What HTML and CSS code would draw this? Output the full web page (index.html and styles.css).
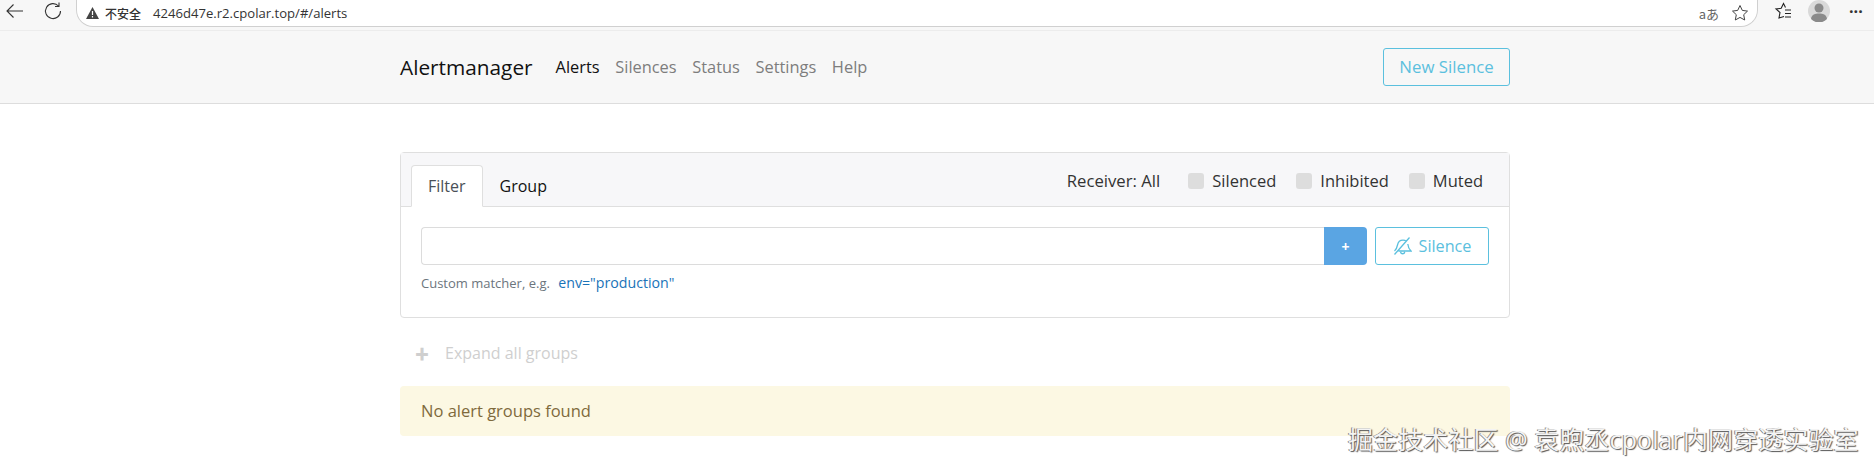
FILE: index.html
```html
<!DOCTYPE html>
<html lang="zh">
<head>
<meta charset="utf-8">
<title>Alertmanager</title>
<link rel="stylesheet" href="styles.css">
</head>
<body>
<div class="chrome">
  <svg class="ico back" width="20" height="20" viewBox="0 0 20 20"><path d="M19 10H3.500M9.500 3.500 3 10l6.500 6.500" fill="none" stroke="#333" stroke-width="1.100"/></svg>
  <svg class="ico reload" width="20" height="20" viewBox="0 0 20 20"><path d="M15.500 5A7.500 7.500 0 1 0 17.500 10M16 1.500V5.500h-4" fill="none" stroke="#333" stroke-width="1.100"/></svg>
  <div class="url">
    <svg width="13" height="12" viewBox="0 0 13 12"><path d="M6.500 0 13 12H0z" fill="#444"/><path d="M6.500 4v4M6.500 9v1.500" stroke="#fff" stroke-width="1.200"/></svg>
    <span class="insecure">不安全</span>
    <span class="addr">4246d47e.r2.cpolar.top/#/alerts</span>
    <span class="url-gap"></span>
    <span class="aa">aあ</span>
    <svg width="18" height="18" viewBox="0 0 18 18"><path d="m9 1.500 2.300 4.900 5.200.7-3.800 3.600 1 5.300L9 13.400l-4.700 2.600 1-5.300L1.500 7.100l5.200-.7z" fill="none" stroke="#444"/></svg>
  </div>
  <svg class="fav" width="18" height="18" viewBox="0 0 18 18"><path d="M10 14.500 5 16l1-5.500L2 7l5.200-.7L9.500 1.500l2 4" fill="none" stroke="#222" stroke-width="1.100"/><path d="M11 8h6M11 11.500h6M11 15h6" stroke="#222"/></svg>
  <svg class="avatar" width="22" height="22" viewBox="0 0 22 22"><circle cx="11" cy="11" r="11" fill="#d9d9d9"/><circle cx="11" cy="8" r="4.500" fill="#8a8a8a"/><path d="M3 19c1-5 4-5.500 8-5.500s7 .5 8 5.500a11 11 0 0 1-16 0z" fill="#8a8a8a"/></svg>
  <span class="more">···</span>
</div>

<nav class="navbar">
  <div class="shell nav-row">
    <a class="brand">Alertmanager</a>
    <a class="nav-link active">Alerts</a>
    <a class="nav-link">Silences</a>
    <a class="nav-link">Status</a>
    <a class="nav-link">Settings</a>
    <a class="nav-link">Help</a>
    <button class="btn new">New Silence</button>
  </div>
</nav>

<main class="shell content">
  <section class="card">
    <header class="card-head">
      <a class="tab on">Filter</a>
      <a class="tab">Group</a>
      <span class="receiver">Receiver: All</span>
      <label class="check"><i></i>Silenced</label>
      <label class="check"><i></i>Inhibited</label>
      <label class="check"><i></i>Muted</label>
    </header>
    <div class="card-body">
      <div class="filter-row">
        <div class="input"></div>
        <button class="plus">+</button>
        <button class="btn silence">
          <svg width="19" height="18" viewBox="0 0 19 18"><path d="M1.500 17.500 16.500.5M1.500 14c2-1.500 2.500-3.500 3-6 .6-3 3-4.800 5.500-4.800 1.300 0 2.500.4 3.400 1.200M14.800 7c.3 3 1.300 5.300 3.200 7H5.500M7.500 15c.6 2.300 3.700 2.300 4.300 0" fill="none" stroke="currentColor" stroke-width="1.300"/></svg>
          Silence
        </button>
      </div>
      <p class="hint">Custom matcher, e.g. <a>env="production"</a></p>
    </div>
  </section>
  <div class="expand"><b>✚</b><span>Expand all groups</span></div>
  <div class="alert">No alert groups found</div>
</main>
<div class="mark">掘金技术社区 @ 袁煦丞cpolar内网穿透实验室</div>
</body>
</html>
```
FILE: styles.css
```css
* { box-sizing: border-box; }
html, body { margin: 0; height: 471px; overflow: hidden; }
body { font-family: "Open Sans", "Noto Sans", "Noto Sans CJK SC", sans-serif; background: #fff; color: #212529; }
.chrome { height: 31px; background: #f7f7f7; display: flex; align-items: flex-start; padding-left: 4px; border-bottom: 1px solid #ececec; }
.ico { flex: none; margin-top: 1px; }
.back { margin-right: 19px; }
.reload { margin-right: 13px; }
.url { width: 1682px; height: 27px; background: #fff; border: 1px solid #d0d0d0; border-top: 0; border-radius: 0 0 17px 17px; display: flex; align-items: center; padding: 0 8px 0 9px; font-size: 13.100px; }
.insecure { margin-left: 6px; font-family: "Noto Sans CJK SC", sans-serif; font-size: 12px; font-weight: 500; color: #333; }
.addr { margin-left: 12px; color: #333; }
.url-gap { flex: 1; }
.aa { font-size: 13px; color: #666; margin-right: 12px; font-family: "Noto Sans CJK SC", sans-serif; }
.fav { margin-left: 16px; margin-top: 2px; }
.avatar { margin-left: 16px; }
.more { margin-left: 19px; font-size: 16px; line-height: 22px; font-weight: 700; color: #333; }
.shell { padding-left: 400px; width: 1510px; }
.navbar { height: 73px; background: #f7f7f7; border-bottom: 1px solid #ddd; }
.nav-row { height: 71px; display: flex; align-items: center; font-size: 16.400px; }
.brand { font-size: 20.800px; color: #111; margin-right: 23px; }
.nav-link { margin-right: 15.600px; color: #7d7d7d; }
.nav-link.active { color: #111; }
.btn { font: inherit; background: transparent; color: #5bc0de; border: 1px solid #5bc0de; border-radius: 3px; }
.new { margin-left: auto; width: 127px; height: 38px; padding: 0; font-size: 16.800px; }
.content { padding-top: 48px; }
.card { height: 166px; border: 1px solid #dfdfdf; border-radius: 4px; }
.card-head { height: 54px; background: #f7f7f9; border-bottom: 1px solid #dfdfdf; display: flex; align-items: flex-end; padding-left: 10px; padding-right: 26px; font-size: 16.500px; color: #333; }
.tab { height: 42px; padding: 0 16px; line-height: 40px; color: #111; margin-bottom: -1px; border: 1px solid transparent; font-size: 16px; }
.tab.on { background: #fff; border-color: #dfdfdf #dfdfdf #fff; border-radius: 4px 4px 0 0; color: #495057; }
.receiver { margin-left: auto; margin-right: 28px; align-self: center; font-size: 16.700px; margin-top: 2px; }
.check { display: flex; align-items: center; margin-left: 20px; align-self: center; margin-top: 2px; }
.receiver + .check { margin-left: 0; }
.check i { width: 16px; height: 16px; background: #ddd; border-radius: 3px; margin-right: 8px; }
.card-body { padding: 20px 20px 0; }
.filter-row { display: flex; height: 38px; }
.input { flex: 1; border: 1px solid #dcdcdc; border-right: 0; border-radius: 4px 0 0 4px; }
.plus { width: 43px; border: 0; background: #5aa5e3; color: #fff; border-radius: 0 4px 4px 0; font: 700 14px "Open Sans", sans-serif; }
.silence { width: 114px; margin-left: 8px; font-size: 16.200px; display: flex; align-items: center; justify-content: center; gap: 7px; padding: 0; }
.hint { margin: 8px 0 0; font-size: 13px; color: #6c757d; }
.hint a { margin-left: 5px; color: #1a73b8; font-size: 14.200px; }
.expand { height: 68px; padding: 1px 0 0 15px; display: flex; align-items: center; color: #cfcfcf; font-size: 16px; }
.expand b { font-size: 14px; width: 30px; }
.alert { height: 50px; background: #fcf8e3; color: #7f6a3c; border-radius: 4px; padding: 0 21px 1px; display: flex; align-items: center; font-size: 16.500px; }
.mark { position: absolute; left: 1348px; top: 420px; white-space: nowrap; font-family: "Open Sans", "Noto Sans CJK SC", sans-serif; font-size: 25px; letter-spacing: .1px; color: #f4f4f4; text-shadow: 1px 1px 1px #555, -1px 0 0 #888; }
```
